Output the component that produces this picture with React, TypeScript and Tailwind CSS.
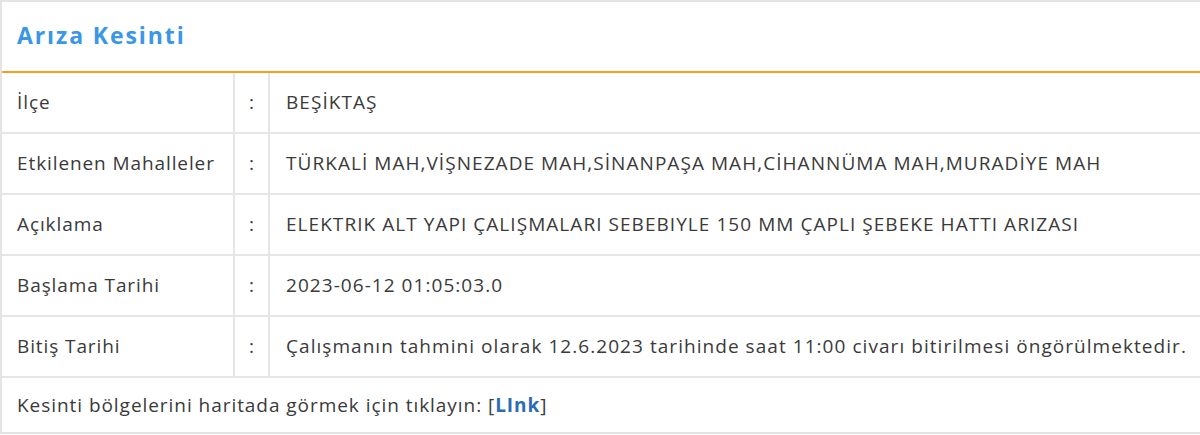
import React from 'react';

const rows: { label: string; value: string }[] = [
  { label: 'İlçe', value: 'BEŞİKTAŞ' },
  { label: 'Etkilenen Mahalleler', value: 'TÜRKALİ MAH,VİŞNEZADE MAH,SİNANPAŞA MAH,CİHANNÜMA MAH,MURADİYE MAH' },
  { label: 'Açıklama', value: 'ELEKTRIK ALT YAPI ÇALIŞMALARI SEBEBIYLE 150 MM ÇAPLI ŞEBEKE HATTI ARIZASI' },
  { label: 'Başlama Tarihi', value: '2023-06-12 01:05:03.0' },
  { label: 'Bitiş Tarihi', value: 'Çalışmanın tahmini olarak 12.6.2023 tarihinde saat 11:00 civarı bitirilmesi öngörülmektedir.' },
];

export default function App() {
  return (
    <div className="w-[1200px] h-[435px] bg-white font-['Open_Sans',sans-serif] text-[#3a3a3a]">
      <div className="border-l-2 border-t-2 border-b-2 border-[#e4e4e4] h-[434px] flex flex-col">
        {/* Header */}
        <div className="h-[71px] shrink-0 flex items-center px-[15px] pb-[3px] border-b-2 border-[#f5a01a]">
          <h2 className="text-[23px] font-bold text-[#3a96e6] tracking-[1.9px]">Arıza Kesinti</h2>
        </div>

        {/* Rows */}
        {rows.map((r) => (
          <div key={r.label} className="grid grid-cols-[231px_2px_33px_2px_1fr] h-[61px] shrink-0 border-b-2 border-[#e6e6e6] text-[19px] tracking-[1.05px]">
            <div className="flex items-center pl-[15px] tracking-[0.9px]">{r.label}</div>
            <div className="bg-[#e6e6e6]" />
            <div className="flex items-center justify-center tracking-normal">:</div>
            <div className="bg-[#e6e6e6]" />
            <div className="flex items-center pl-[16px] whitespace-nowrap">{r.value}</div>
          </div>
        ))}

        <div className="flex-1 flex items-center pl-[15px] text-[19px] tracking-[0.95px]">
          <span>
            Kesinti bölgelerini haritada görmek için tıklayın: [<a href="#" className="font-bold text-[#2b6cb5]">LInk</a>]
          </span>
        </div>
      </div>
    </div>
  );
}
